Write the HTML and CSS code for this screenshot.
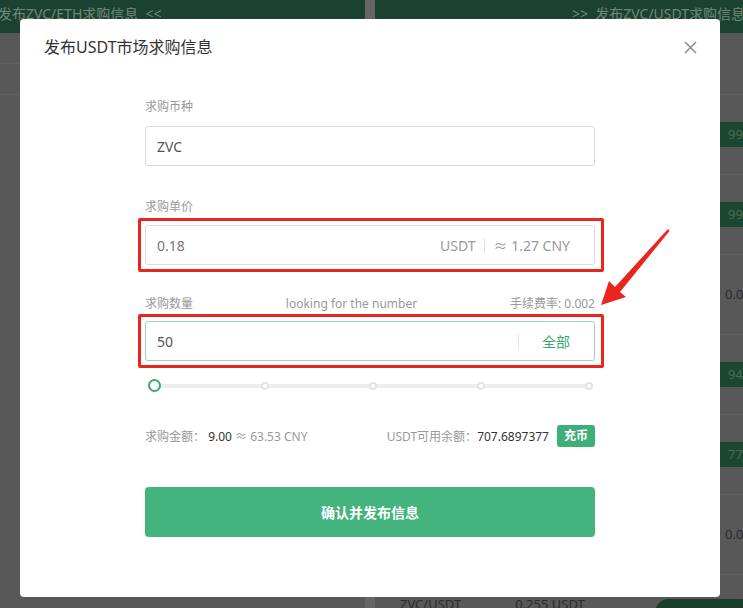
FILE: index.html
```html
<!DOCTYPE html>
<html lang="zh-CN">
<head>
    <meta charset="UTF-8">
    <meta name="viewport" content="width=device-width, initial-scale=1.0">
    <title>发布USDT市场求购信息</title>
    <link rel="stylesheet" href="styles.css">
</head>
<body>
    <div class="page">
        <section class="panel">
            <div class="panel-head left-head">发布ZVC/ETH求购信息 &nbsp;&lt;&lt;</div>
            <div class="line-row"></div>
            <div class="line-row"></div>
            <div class="plain-row"><span class="pill small-pill"></span></div>
        </section>
        <div class="divider"></div>
        <section class="panel right">
            <div class="panel-head right-head">&gt;&gt; &nbsp;发布ZVC/USDT求购信息</div>
            <div class="row short"></div>
            <div class="row"><span class="cell-end tag">99</span></div>
            <div class="row"><span class="cell-end tag">99</span></div>
            <div class="row"><span class="cell-end num">0.0</span></div>
            <div class="row"><span class="cell-end tag">94</span></div>
            <div class="row"><span class="cell-end tag">77</span></div>
            <div class="row"><span class="cell-end num">0.0</span></div>
            <div class="row last">
                <span class="pair">ZVC/USDT</span>
                <span class="price">0.255 USDT</span>
                <span class="pill big-pill"></span>
            </div>
        </section>
    </div>

    <div class="mask">
        <div class="modal">
            <div class="modal-head">
                <h3>发布USDT市场求购信息</h3>
                <span class="close">
                    <svg width="13" height="13" viewBox="0 0 13 13"><path d="M1 1L12 12M12 1L1 12" stroke="#8a8a8a" stroke-width="1.5" fill="none"/></svg>
                </span>
            </div>
            <div class="form">
                <div class="field first">
                    <div class="label">求购币种</div>
                    <div class="input"><span class="val">ZVC</span></div>
                </div>
                <div class="field second">
                    <div class="label">求购单价</div>
                    <div class="mark">
                        <div class="input">
                            <span class="val light">0.18</span>
                            <span class="unit">USDT</span>
                            <span class="sep"></span>
                            <span class="unit">≈ 1.27 CNY</span>
                        </div>
                    </div>
                </div>
                <div class="field third">
                    <div class="label label-row">
                        <span>求购数量</span>
                        <span>looking for the number</span>
                        <span>手续费率: 0.002</span>
                    </div>
                    <div class="mark">
                        <div class="input active">
                            <span class="val">50</span>
                            <span class="sep"></span>
                            <span class="all">全部</span>
                        </div>
                    </div>
                </div>
                <div class="slider">
                    <span class="thumb"></span>
                    <span class="dot"></span>
                    <span class="dot"></span>
                    <span class="dot"></span>
                    <span class="dot"></span>
                </div>
                <div class="summary">
                    <div>求购金额： <b>9.00</b> ≈ 63.53 CNY</div>
                    <div class="balance">USDT可用余额：<b>707.6897377</b><span class="charge">充币</span></div>
                </div>
                <button class="submit">确认并发布信息</button>
            </div>
        </div>
    </div>

    <svg class="arrow" width="743" height="608" viewBox="0 0 743 608">
        <path d="M668 229 L669.5 231 L620 292 L626 297 L601 305 L609 281 L615 287 Z" fill="#e8261e"/>
    </svg>
</body>
</html>
```

FILE: styles.css
```css
html, body {
    margin: 0;
    padding: 0;
}
body {
    width: 743px;
    height: 608px;
    overflow: hidden;
    background: #585858;
    font-family: "Noto Sans", "Noto Sans CJK SC", sans-serif;
    position: relative;
}
.page {
    display: flex;
    width: 790px;
    height: 608px;
}
.panel {
    width: 365px;
    flex-shrink: 0;
}
.panel.right {
    width: 415px;
}
.divider {
    width: 10px;
    background: #666;
    flex-shrink: 0;
}
.panel-head {
    height: 33px;
    line-height: 27px;
    background: #1b4230;
    color: #6d8a79;
    font-size: 14px;
    white-space: nowrap;
}
.left-head {
    text-indent: -2px;
}
.right-head {
    padding-left: 197px;
}
.line-row {
    height: 30px;
    border-bottom: 1px solid #606060;
}
.plain-row {
    height: 560px;
    display: flex;
    align-items: flex-end;
}
.row {
    height: 79px;
    border-bottom: 1px solid #616161;
    display: flex;
    align-items: center;
}
.row.short {
    height: 61px;
}
.cell-end {
    margin-left: 345px;
    font-size: 13px;
    height: 25px;
    line-height: 25px;
    padding: 0 8px;
}
.tag {
    background: #1c4631;
    color: #476a55;
}
.num {
    color: #2a2a2a;
    padding-left: 5px;
}
.row.last {
    align-items: flex-start;
    font-size: 13px;
    color: #2b2b2b;
}
.pair {
    margin: 20px 0 0 25px;
}
.price {
    margin: 20px 0 0 54px;
}
.pill {
    display: block;
    background: #1a3d2c;
    border-radius: 14px;
    height: 28px;
}
.small-pill {
    width: 48px;
    margin: 0 0 -50px 287px;
}
.big-pill {
    width: 100px;
    margin: 24px 0 0 70px;
}

.mask {
    position: absolute;
    inset: 0;
}
.modal {
    position: absolute;
    left: 20px;
    top: 19px;
    width: 700px;
    height: 578px;
    background: #fff;
    border-radius: 4px;
}
.modal-head {
    display: flex;
    justify-content: space-between;
    align-items: center;
    padding: 18px 23px 18px 24px;
}
.modal-head h3 {
    margin: 0;
    font-size: 16px;
    line-height: 20px;
    font-weight: normal;
    color: #333;
}
.close {
    display: flex;
}
.form {
    width: 450px;
    margin: 0 auto;
}
.label {
    font-size: 12px;
    line-height: 18px;
    color: #999;
}
.field.first {
    margin-top: 23px;
}
.field.first .label {
    margin-bottom: 10px;
}
.field.second {
    margin-top: 32px;
}
.field.second .label {
    margin-bottom: 2px;
}
.field.third {
    margin-top: 30px;
}
.field.third .label {
    margin-bottom: 1px;
}
.label-row {
    display: flex;
    justify-content: space-between;
}
.mark {
    margin: 0 -9px -7px -7px;
    padding: 4px 6px 4px 4px;
    border: 3px solid #e8261e;
    border-radius: 2px;
}
.input {
    height: 40px;
    box-sizing: border-box;
    border: 1px solid #dcdcdc;
    border-radius: 3px;
    display: flex;
    align-items: center;
    padding: 0 24px 0 11px;
    font-size: 14px;
}
.input.active {
    border-color: #9fd4b7;
}
.val {
    color: #555;
    flex: 1;
}
.val.light {
    color: #777;
}
.unit {
    color: #999;
}
.sep {
    width: 1px;
    height: 15px;
    background: #e3e3e3;
    margin: 0 9px 0 8px;
}
.input.active .sep {
    margin: 0 23px 0 0;
}
.all {
    color: #3aa872;
}
.slider {
    margin: 18px 2px 0 3px;
    height: 13px;
    display: flex;
    justify-content: space-between;
    align-items: center;
    background: linear-gradient(#eee, #eee) center / 100% 4px no-repeat;
}
.thumb {
    width: 13px;
    height: 13px;
    box-sizing: border-box;
    border: 2px solid #3da876;
    border-radius: 50%;
    background: #fff;
}
.dot {
    width: 8px;
    height: 8px;
    box-sizing: border-box;
    border: 2px solid #e4e4e4;
    border-radius: 50%;
    background: #fff;
}
.summary {
    margin-top: 33px;
    height: 22px;
    display: flex;
    justify-content: space-between;
    align-items: center;
    font-size: 12px;
    color: #999;
}
.summary b {
    font-weight: normal;
    color: #333;
}
.balance {
    display: flex;
    align-items: center;
}
.charge {
    margin-left: 8px;
    height: 22px;
    line-height: 22px;
    padding: 0 7px;
    background: #3fae78;
    color: #fff;
    font-weight: bold;
    border-radius: 3px;
}
.submit {
    display: block;
    margin-top: 40px;
    width: 100%;
    height: 50px;
    border: none;
    border-radius: 4px;
    background: #43b47d;
    color: #fff;
    font-family: "Noto Sans CJK SC", sans-serif;
    font-size: 14px;
    font-weight: bold;
}
.arrow {
    position: absolute;
    left: 0;
    top: 0;
    pointer-events: none;
}
```
